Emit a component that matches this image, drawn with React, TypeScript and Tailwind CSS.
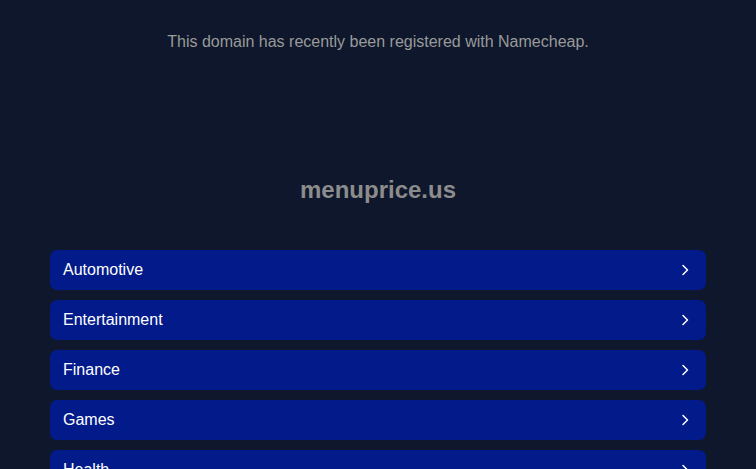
import React from 'react';

const categories = ['Automotive', 'Entertainment', 'Finance', 'Games', 'Health', 'Home'];

const Chevron = () => (
  <svg width="14" height="14" viewBox="0 0 14 14" fill="none" className="shrink-0">
    <path d="M5 2.5L9.5 7L5 11.5" stroke="white" strokeWidth="1.5" strokeLinecap="round" strokeLinejoin="round" />
  </svg>
);

export default function App() {
  return (
    <div className="min-h-screen bg-[#0e172b] font-['Liberation_Sans',Arial,sans-serif] overflow-hidden">
      <p className="pt-[30px] text-center text-[16px] leading-6 text-[#9a9a9a]">
        This domain has recently been registered with Namecheap.
      </p>
      <h1 className="mt-[122px] text-center text-[24px] font-bold leading-7 text-[#8c8c8c]">menuprice.us</h1>
      <div className="mt-[46px] px-[50px] flex flex-col gap-[10px]">
        {categories.map((c) => (
          <div
            key={c}
            className="h-[40px] rounded-[7px] bg-[#021a8a] pl-[13px] pr-[14px] flex items-center justify-between text-white text-[16px]"
          >
            <span>{c}</span>
            <Chevron />
          </div>
        ))}
      </div>
    </div>
  );
}
